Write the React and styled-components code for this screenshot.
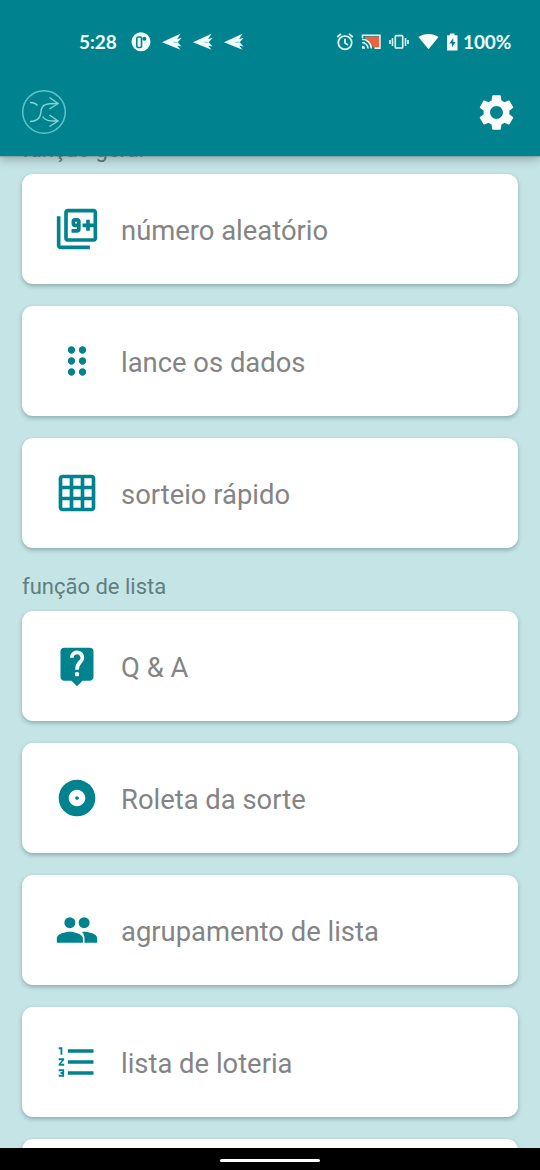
import React from "react";
import styled, { createGlobalStyle } from "styled-components";
import {
  MdAlbum,
  MdDragIndicator,
  MdFormatListNumbered,
  MdGridOn,
  MdOutlineFilter9Plus,
  MdSettings,
} from "react-icons/md";

const HelpIcon = ({ size }) => (
  <svg width={size} height={size} viewBox="0 0 24 24">
    <path
      d="M19 2H5a2 2 0 0 0-2 2v14c0 1.100.900 2 2 2h4l3 3 3-3h4c1.100 0 2-.900 2-2V4a2 2 0 0 0-2-2z"
      fill="currentColor"
    />
    <path
      d="M9.200 7.500a2.850 2.850 0 1 1 4.900 1.900c-1.200 1.200-2.100 1.900-2.100 4.600"
      fill="none"
      stroke="#fff"
      strokeWidth="2"
    />
    <rect x="10.900" y="15.400" width="2.200" height="2.200" rx="0.500" fill="#fff" />
  </svg>
);

const PeopleIcon = ({ size }) => (
  <svg width={size} height={size} viewBox="0 0 24 24" fill="currentColor">
    <circle cx="8.100" cy="8" r="3" />
    <circle cx="15.900" cy="8" r="3" />
    <path d="M8 13c-2.330 0-7 1.170-7 3.500V19h14.200v-2.500C15.200 14.200 10.330 13 8 13z" />
    <path d="M14.700 13.100c.400-.070.900-.100 1.300-.100 2.330 0 7 1.170 7 3.500V19h-6.900v-2.500c0-1.400-.500-2.500-1.400-3.400z" />
  </svg>
);

const generalItems = [
  { label: "número aleatório", icon: MdOutlineFilter9Plus },
  { label: "lance os dados", icon: MdDragIndicator },
  { label: "sorteio rápido", icon: MdGridOn },
];

const listItems = [
  { label: "Q & A", icon: HelpIcon },
  { label: "Roleta da sorte", icon: MdAlbum },
  { label: "agrupamento de lista", icon: PeopleIcon },
  { label: "lista de loteria", icon: MdFormatListNumbered },
];

const Plane = () => (
  <svg width="20" height="18" viewBox="0 0 20 18">
    <path
      d="M0 9.200 18.500.8 15 6.200l4.700-1.400-4 4.400 3.800 4.400-4.300-.900 3.300 4.100z"
      fill="#effdfd"
    />
    <path d="M11.500 9.200h4" stroke="#6fb5b9" strokeWidth="0.800" />
  </svg>
);

const StatusIcons = () => (
  <svg width="127" height="22" viewBox="0 0 127 22" fill="none">
    {/* alarm */}
    <g stroke="#e4fbfb" strokeWidth="1.700">
      <circle cx="9" cy="11.700" r="6.700" />
      <path d="M9 7.700V12l3 2M1.200 6 5 2.800M16.800 6 13 2.800" />
    </g>
    {/* cast */}
    <path d="M29 5.500h14V16.500H37C36 12.500 33.500 9.500 29 8.500z" fill="#f0623d" />
    <g stroke="#e4fbfb" strokeWidth="1.600">
      <path d="M26.500 7V4.200h17.400v12.900h-5.400" />
      <path d="M26 8.200a9.300 9.300 0 0 1 9.300 9.300M26 11.500a6 6 0 0 1 6 6" />
    </g>
    <path d="M26 14.700a3 3 0 0 1 3 3h-3z" fill="#e4fbfb" />
    {/* vibrate */}
    <g stroke="#e4fbfb" strokeWidth="1.600">
      <rect x="59.300" y="4.600" width="7.400" height="12.400" rx="0.800" />
      <path d="M56.500 7v8M69.500 7v8M54 9v4M72 9v4" />
    </g>
    {/* wifi */}
    <path d="M82.500 5.900c5.500-4 14.500-4 20 0L92.500 18.300z" fill="#fff" />
    {/* battery */}
    <path d="M111 4.300h3V2.500h4.500v1.800h3V19.500H111z" fill="#fff" />
    <path d="m117.300 7-4 5.600h2.600v4l3.700-5.500h-2.300z" fill="#00838f" />
  </svg>
);

const Parking = () => (
  <svg width="20" height="20" viewBox="0 0 20 20">
    <circle cx="10" cy="9.700" r="9.500" fill="#effdfd" />
    <rect
      x="5.800"
      y="5"
      width="4.700"
      height="10.500"
      rx="1.400"
      fill="#effdfd"
      stroke="#00838f"
      strokeWidth="1.600"
    />
    <circle cx="13.300" cy="6.800" r="2" fill="#00838f" />
  </svg>
);

const Logo = () => (
  <svg width="46" height="46" viewBox="0 0 46 46" fill="none">
    <circle cx="23" cy="23" r="21.300" stroke="#5cc5ca" strokeWidth="1.500" />
    <g stroke="#86d3d6" strokeWidth="1.400">
      <path d="M9 13.500c3 0 5.500.800 7.500 3M9 32.500c5 0 9-1 10.500-7l.8-5C21.500 15.500 25 14.500 36 14.500" />
      <path d="M21.500 27.500c2 3.500 5.500 4.500 14.500 4.500M28.500 8.500 37 14.500l-8.500 5.500M28.500 26 37 32l-8.500 5.500" />
    </g>
  </svg>
);

const MenuCard = ({ label, icon: Icon }) => (
  <Card>
    <Icon size={44} />
    <span>{label}</span>
  </Card>
);

const App = () => {
  return (
    <Screen>
      <GlobalStyle />
      <Header>
        <StatusBar>
          <StatusText $width="52px">5:28</StatusText>
          <Notifications>
            <Parking />
            <Plane />
            <Plane />
            <Plane />
          </Notifications>
          <StatusIcons />
          <StatusText>100%</StatusText>
        </StatusBar>
        <Toolbar>
          <Logo />
          <MdSettings size={43} />
        </Toolbar>
      </Header>
      <Content>
        <List>
          <SectionTitle>função geral</SectionTitle>
          {generalItems.map((item) => (
            <MenuCard key={item.label} {...item} />
          ))}
          <SectionTitle>função de lista</SectionTitle>
          {listItems.map((item) => (
            <MenuCard key={item.label} {...item} />
          ))}
          <Card />
        </List>
      </Content>
      <NavBar>
        <Handle />
      </NavBar>
    </Screen>
  );
};

export default App;

const GlobalStyle = createGlobalStyle`
  * {
    box-sizing: border-box;
  }
  body {
    margin: 0;
    font-family: Roboto, "Noto Sans", sans-serif;
  }
  svg {
    display: block;
    flex-shrink: 0;
  }
`;

const Screen = styled.div`
  display: flex;
  flex-direction: column;
  width: 540px;
  height: 1170px;
  overflow: hidden;
  background: #c5e4e6;
`;

const Header = styled.header`
  position: relative;
  z-index: 1;
  flex: none;
  height: 156px;
  background: #00838f;
  box-shadow: 0 1px 1px rgba(90, 130, 135, 0.4), 0 4px 9px rgba(0, 0, 0, 0.24);
`;

const StatusBar = styled.div`
  display: flex;
  align-items: center;
  height: 84px;
  padding: 0 20px 0 79px;
  color: #effdfd;
`;

const StatusText = styled.span`
  flex: none;
  width: ${(props) => props.$width || "auto"};
  padding-bottom: 1px;
  font-family: Lato, sans-serif;
  font-size: 19px;
  font-weight: 700;
  letter-spacing: -0.1px;
`;

const Notifications = styled.div`
  display: flex;
  align-items: center;
  flex: none;
  gap: 11px;
  width: 205px;
`;

const Toolbar = styled.div`
  display: flex;
  align-items: center;
  justify-content: space-between;
  height: 56px;
  padding: 0 22px 0 21px;
  color: #fff;
`;

const Content = styled.main`
  flex: 1;
  min-height: 0;
  overflow: hidden;
`;

const List = styled.div`
  margin-top: -23px;
  padding: 0 22px;
`;

const SectionTitle = styled.h2`
  height: 41px;
  margin: 0;
  padding-top: 4px;
  color: #5f7f80;
  font-size: 22px;
  font-weight: 400;
  line-height: 26px;
`;

const Card = styled.div`
  display: flex;
  align-items: center;
  gap: 22px;
  height: 110px;
  margin-bottom: 22px;
  padding-left: 33px;
  border-radius: 11px;
  background: #fff;
  box-shadow: 0 2px 4px rgba(0, 40, 45, 0.3);
  color: #00838f;

  span {
    padding-top: 3px;
    color: #848484;
    font-size: 27.4px;
    white-space: nowrap;
  }
`;

const NavBar = styled.footer`
  display: flex;
  align-items: center;
  justify-content: center;
  flex: none;
  height: 22px;
  padding-top: 2px;
  background: #000;
`;

const Handle = styled.div`
  width: 100px;
  height: 3px;
  border-radius: 2px;
  background: #fff;
`;
